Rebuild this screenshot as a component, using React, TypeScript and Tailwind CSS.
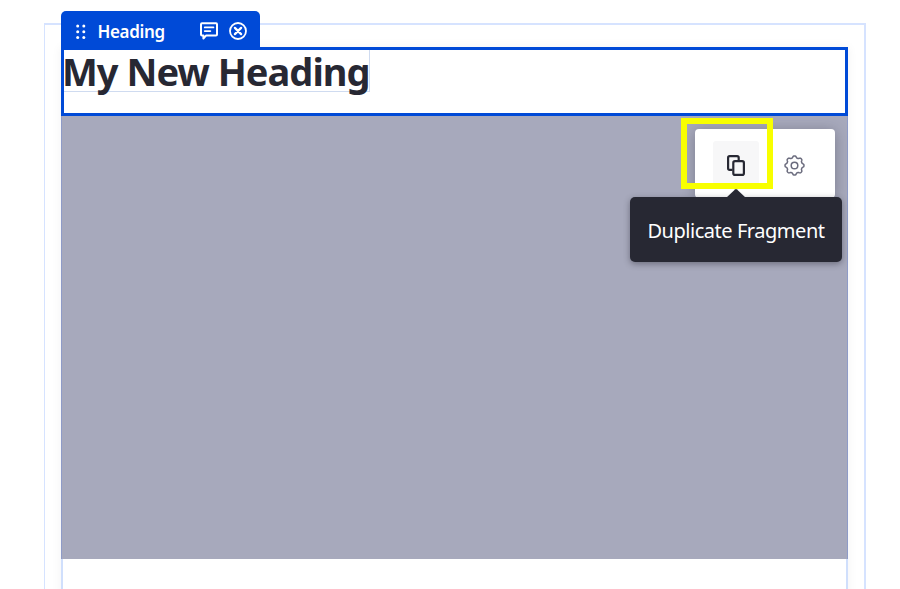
import React from "react";

function FragmentTab() {
  return (
    <div className="absolute -top-[36px] -left-[2px] flex h-[37px] w-[199px] items-center rounded-t-[5px] bg-[#004ad7] pl-[15px] text-white">
      <svg width="10" height="16" viewBox="0 0 10 16" fill="currentColor" className="mt-[4px]">
        {[2, 7.7, 13.4].map((y) => (
          <g key={y}>
            <circle cx="1.7" cy={y} r="1.5" />
            <circle cx="7.8" cy={y} r="1.5" />
          </g>
        ))}
      </svg>
      <span className="ml-[11.5px] mt-[4px] w-[102.5px] whitespace-nowrap text-[17px] font-semibold leading-[24px] tracking-[-0.35px]">
        Heading
      </span>
      <svg width="18" height="19" viewBox="0 0 18 19" fill="none" stroke="currentColor" className="mt-[4px]">
        <path d="M2 1.2h14q1 0 1 1v10.2q0 1-1 1H6.2L3.4 16.5v-3.1H2q-1 0-1-1V2.200q0-1 1-1z" strokeWidth="2" strokeLinejoin="round" />
        <path d="M4.800 5.400h8.600M4.800 9.100h5.500" strokeWidth="1.900" strokeLinecap="round" />
      </svg>
      <svg width="18" height="18" viewBox="0 0 18 18" fill="none" stroke="currentColor" className="ml-[11px] mt-[3px]">
        <circle cx="9" cy="9" r="8" strokeWidth="1.8" />
        <path d="M5.900 5.900l6.200 6.200M12.100 5.900l-6.200 6.200" strokeWidth="2.300" strokeLinecap="round" />
      </svg>
    </div>
  );
}

function GearIcon() {
  const points = Array.from({ length: 97 }, (_, i) => {
    const a = (i / 96) * Math.PI * 2;
    const r = 8.65 + 0.85 * Math.tanh(2 * Math.cos(8 * a));
    return `${(10.5 + r * Math.sin(a)).toFixed(2)},${(10.5 - r * Math.cos(a)).toFixed(2)}`;
  });
  return (
    <svg width="21" height="21" viewBox="0 0 21 21" fill="none" stroke="#6b6c7e" strokeWidth="1.5" strokeLinejoin="round">
      <polygon points={points.join(" ")} />
      <circle cx="10.5" cy="10.5" r="3.3" />
    </svg>
  );
}

function Tooltip() {
  return (
    <div className="absolute left-[-65px] top-[68px] flex h-[65px] w-[212px] items-center justify-center rounded-[5px] bg-[#272833] shadow-[0_2px_6px_rgba(39,40,51,0.45)]">
      <svg width="20" height="9" viewBox="0 0 20 9" className="absolute -top-[8px] left-[96px]">
        <path d="M0 9L9 .5q1-.8 2 0L20 9z" fill="#272833" />
      </svg>
      <span className="mt-[2px] whitespace-nowrap text-[20px] leading-[28px] tracking-[-0.46px] text-white">
        Duplicate Fragment
      </span>
    </div>
  );
}

function FragmentToolbar() {
  return (
    <div className="relative mr-[12px] mt-[13px] flex h-[69px] w-[140px] rounded-[4px] bg-white pl-[18px] pt-[12px] shadow-[0_2px_14px_rgba(39,40,51,0.35)]">
      <button className="flex h-[48px] w-[46px] items-center justify-center rounded-[3px] bg-[#f7f7f8]">
        <svg width="18" height="21" viewBox="0 0 18 21" fill="none" stroke="#272833" strokeWidth="2.2">
          <path d="M5.500 14.900H2.700Q1.100 14.900 1.100 13.300V2.700Q1.100 1.100 2.700 1.100h7.400q1.600 0 1.600 1.600V5.500" />
          <rect x="6.300" y="6.200" width="10.600" height="13.700" rx="1.700" />
        </svg>
      </button>
      <button className="ml-[12px] flex h-[48px] w-[46px] items-center justify-center">
        <GearIcon />
      </button>
      <div className="absolute left-[-14px] top-[-11px] h-[71px] w-[92px] border-[6px] border-[#f8ff00]" />
      <Tooltip />
    </div>
  );
}

export default function App() {
  return (
    <div className="h-[589px] w-[900px] overflow-hidden bg-white pl-[44px] pt-[23px] font-['Noto_Sans','Open_Sans',sans-serif]">
      <main className="h-[600px] w-[822px] border-2 border-l-[1.5px] border-[#d6e3ff] pl-[16px] pt-[22px]">
        <div className="relative h-[560px] w-[787px] border-x-2 border-[#d0dffc] shadow-[0_0_10px_rgba(39,40,51,0.06)]">
          <div className="relative -mx-[2px] h-[69px] border-[3px] border-[#004ad7]">
            <h1 className="h-[42px] w-[306px] whitespace-nowrap border-b border-r border-[#cfdbf0] -indent-[2px] text-[38px] font-bold leading-[43px] tracking-[-0.98px] text-[#272833]">
              My New Heading
            </h1>
          </div>
          <FragmentTab />
          <section className="-mx-[2px] flex h-[443px] items-start justify-end border-x border-[#8e9bc8] bg-[#a7a9bc]">
            <FragmentToolbar />
          </section>
        </div>
      </main>
    </div>
  );
}
